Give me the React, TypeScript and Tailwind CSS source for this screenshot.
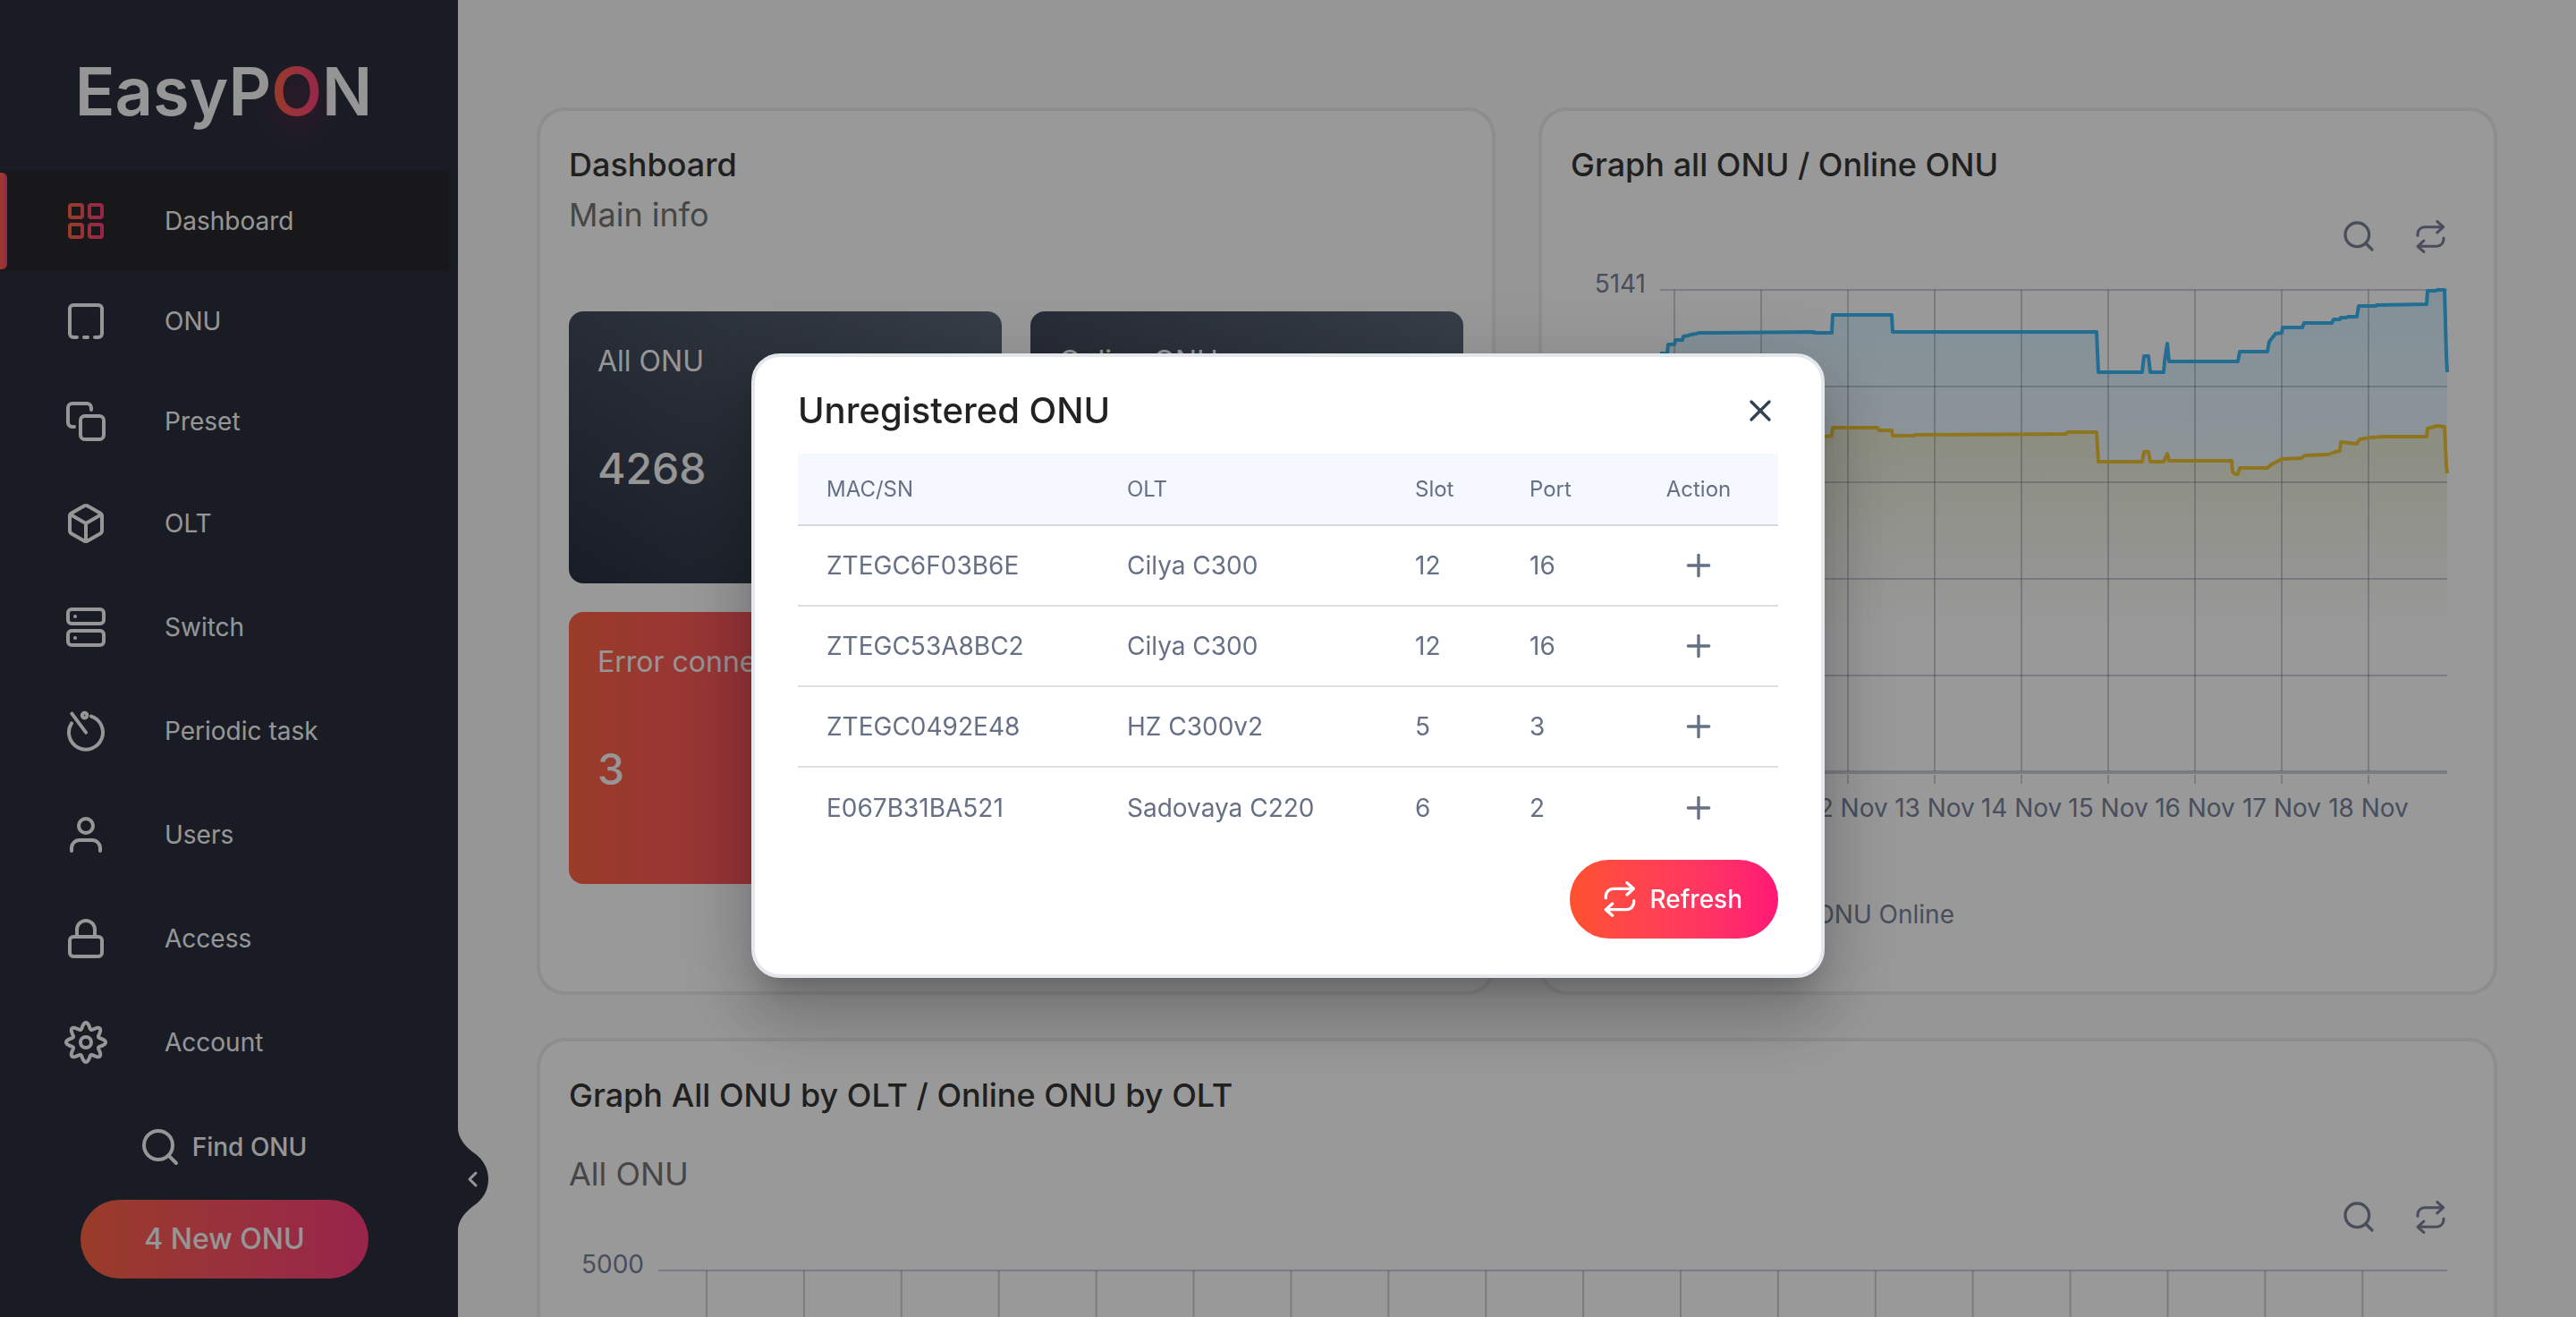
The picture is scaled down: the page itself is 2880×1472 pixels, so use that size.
import React from "react";
import { Box, LayoutGrid, Lock, Plus, Search, Server, X } from "lucide-react";

const stroke = {
  fill: "none",
  stroke: "currentColor",
  strokeWidth: 2,
  strokeLinecap: "round" as const,
  strokeLinejoin: "round" as const,
};

function GridIcon() {
  return (
    <>
      <svg className="absolute h-0 w-0" aria-hidden="true">
        <linearGradient id="accent" gradientUnits="userSpaceOnUse" x1="2" y1="0" x2="22" y2="0">
          <stop offset="0" stopColor="#ff6443" />
          <stop offset="1" stopColor="#fe3c7d" />
        </linearGradient>
      </svg>
      <LayoutGrid className="size-12" stroke="url(#accent)" />
    </>
  );
}

function OnuIcon() {
  return (
    <svg viewBox="0 0 24 24" className="size-12" {...stroke}>
      <path d="M7 21H5a2 2 0 0 1-2-2V5a2 2 0 0 1 2-2h14a2 2 0 0 1 2 2v14a2 2 0 0 1-2 2h-2M11 21h2" />
    </svg>
  );
}

function PresetIcon() {
  return (
    <svg viewBox="0 0 24 24" className="size-12" {...stroke}>
      <rect x="9" y="9" width="13" height="13" rx="2.4" />
      <path d="M15 5.5V4.4A2.4 2.4 0 0 0 12.6 2H4.4A2.4 2.4 0 0 0 2 4.4v8.2A2.4 2.4 0 0 0 4.4 15H5.5" />
    </svg>
  );
}

function TimerIcon() {
  return (
    <svg viewBox="0 0 24 24" className="size-12" {...stroke}>
      <path d="M15 3.8A9.5 9.5 0 1 1 4 7.7M12 12.8L4.2 2.3" />
      <circle cx="11.3" cy="3.3" r="1.4" />
    </svg>
  );
}

function UserIcon() {
  return (
    <svg viewBox="0 0 24 24" className="size-12" {...stroke}>
      <circle cx="12" cy="7" r="4" />
      <path d="M4 21v-1.5A4.5 4.5 0 0 1 8.5 15h7A4.5 4.5 0 0 1 20 19.5V21" />
    </svg>
  );
}

const gearPath =
  "M" +
  Array.from({ length: 160 }, (_, i) => {
    const t = (i / 160) * Math.PI * 2;
    const r = 9.3 + 1.7 * Math.cos(8 * t);
    return `${(12 + r * Math.cos(t)).toFixed(2)} ${(12 + r * Math.sin(t)).toFixed(2)}`;
  }).join("L") +
  "Z";

function GearIcon() {
  return (
    <svg viewBox="0 0 24 24" className="size-12 overflow-visible" {...stroke}>
      <path d={gearPath} />
      <circle cx="12" cy="12" r="3" />
    </svg>
  );
}

function RepeatIcon({ className }: { className: string }) {
  return (
    <svg viewBox="0 0 120 120" className={className} {...stroke} strokeWidth={10}>
      <path d="M13 56V50a25 25 0 0 1 25-25H105M84 5L106 25L84 45" />
      <path d="M107 65V70a25 25 0 0 1-25 25H15M35 75L13 95L35 115" />
    </svg>
  );
}

const navItems = [
  { label: "Dashboard", icon: <GridIcon />, active: true, height: "h-28" },
  { label: "ONU", icon: <OnuIcon />, height: "h-28" },
  { label: "Preset", icon: <PresetIcon />, height: "h-28" },
  { label: "OLT", icon: <Box className="size-12" />, height: "h-29" },
  { label: "Switch", icon: <Server className="size-12" />, height: "h-29" },
  { label: "Periodic task", icon: <TimerIcon />, height: "h-29" },
  { label: "Users", icon: <UserIcon />, height: "h-29" },
  { label: "Access", icon: <Lock className="size-12" />, height: "h-29" },
  { label: "Account", icon: <GearIcon />, height: "h-29" },
];

function Sidebar() {
  return (
    <aside className="relative flex w-[512px] shrink-0 flex-col bg-[#2a303e] text-[#fafafa]">
      <div className="flex h-[191px] items-center justify-center pt-3 pr-3">
        <a href="#" className="text-[74px] leading-none font-semibold">
          EasyP
          <span className="relative bg-gradient-to-r from-[#ff6443] to-[#fe3c7d] bg-clip-text text-transparent [filter:drop-shadow(0_16px_14px_rgb(255_23_110/0.3))]">
            O
          </span>
          N
        </a>
      </div>
      <nav className="flex flex-col pr-2.5">
        {navItems.map((item) => (
          <a
            key={item.label}
            href="#"
            className={`relative flex items-center gap-16 pl-[72px] text-[28px] ${item.height} ${item.active ? "bg-[#28292e]" : ""}`}
          >
            {item.active && (
              <span className="absolute inset-y-0.5 left-0 w-2 rounded-r-md bg-gradient-to-r from-[#ff6443] to-[#fe3c7d]" />
            )}
            {item.icon}
            {item.label}
          </a>
        ))}
      </nav>
      <div className="flex flex-col items-center gap-4 pt-4 pr-2.5">
        <button className="flex h-[86px] w-[400px] items-center justify-center gap-3 rounded-lg border-2 border-[#282e3b] pr-1 text-[28px] font-medium">
          <Search className="size-12" />
          Find ONU
        </button>
        <button className="h-22 w-[322px] rounded-full bg-gradient-to-r from-[#ff6443] to-[#fe3c7d] text-[32px] font-medium">
          4 New ONU
        </button>
      </div>
      <button aria-label="Collapse menu" className="absolute top-[1262px] left-full z-10 h-28 w-[34px]">
        <svg viewBox="0 0 34 112" className="h-28 w-[34px]">
          <path
            d="M0 0C1 11 8 19 17 26C28 33 34 44 34 56C34 68 28 79 17 86C8 93 1 101 0 112Z"
            fill="#2a303e"
          />
          <path d="M20 49L13 56L20 63" {...stroke} strokeWidth={3} />
        </svg>
      </button>
    </aside>
  );
}

const tiles = [
  { label: "All ONU", value: "4268", tone: "dark" },
  { label: "Online ONU", value: "", tone: "dark" },
  { label: "Error connection", value: "3", tone: "accent" },
];

function InfoCard() {
  return (
    <section className="rounded-[32px] border-4 border-[#e9ebee] bg-white p-8">
      <h2 className="text-[36px] leading-[56px] font-medium text-[#363636]">Dashboard</h2>
      <p className="text-[36px] leading-[56px] text-[#757575]">Main info</p>
      <div className="mt-20 grid grid-cols-2 gap-8">
        {tiles.map((tile) => (
          <div
            key={tile.label}
            className={`h-[304px] rounded-2xl px-8 pt-7 text-[#fafafa] ${
              tile.tone === "dark"
                ? "bg-gradient-to-tr from-[#293040] to-[#5d6878]"
                : "bg-gradient-to-r from-[#ff6443] to-[#fe3c7d]"
            }`}
          >
            <p className="text-[32px] leading-[56px]">{tile.label}</p>
            <p className="mt-14 text-[48px] leading-[72px] font-medium">{tile.value}</p>
          </div>
        ))}
      </div>
    </section>
  );
}

function ChartTools() {
  return (
    <div className="flex h-10 items-center justify-end gap-10.5 pr-5 text-[#79839a]">
      <button aria-label="Zoom">
        <Search className="size-10" />
      </button>
      <button aria-label="Restore">
        <RepeatIcon className="size-[37px]" />
      </button>
    </div>
  );
}

const allOnu =
  "100,95 108,95 109,85 116,85 117,80 125,80 126,76 132,75 134,74 141,73 143,72 164,72 272,71 273,72 292,72 293,52 359,52 360,71 555,71 588,71 590,116 639,116 641,98 646,98 648,116 663,116 664,104 667,84 669,104 746,104 748,93 779,93 781,82 788,73 795,72 796,66 818,66 820,61 851,61 853,57 860,57 861,55 867,55 869,54 879,54 881,42 900,42 901,41 957,40 958,25 967,25 969,24 977,24 979,96 980,116";
const onlineOnu =
  "100,194 140,190 220,188 284,188 292,187 293,178 343,178 345,181 359,181 360,187 384,187 386,186 554,185 556,183 588,183 590,216 639,216 641,205 646,205 648,216 663,216 667,207 669,215 739,215 740,227 743,230 746,230 748,223 779,223 782,220 795,213 817,212 821,209 847,208 855,205 860,204 861,194 879,196 882,191 894,189 910,188 957,188 958,179 969,176 977,177 979,221 980,229";

const rows = [24, 132, 239, 347, 455];
const days = [10, 11, 12, 13, 14, 15, 16, 17, 18].map((day, i) => ({ x: 116 + i * 97, label: `${day} Nov` }));

function OnuChart() {
  return (
    <svg viewBox="0 0 1000 640" className="mt-4 w-full overflow-visible" role="img" aria-label="ONU over time">
      <defs>
        <linearGradient id="blueArea" gradientUnits="userSpaceOnUse" x1="0" y1="24" x2="0" y2="400">
          <stop offset="0" stopColor="#3ab7f5" stopOpacity="0.2" />
          <stop offset="1" stopColor="#3ab7f5" stopOpacity="0" />
        </linearGradient>
        <linearGradient id="yellowArea" gradientUnits="userSpaceOnUse" x1="0" y1="176" x2="0" y2="400">
          <stop offset="0" stopColor="#eec332" stopOpacity="0.2" />
          <stop offset="1" stopColor="#eec332" stopOpacity="0" />
        </linearGradient>
      </defs>
      <polygon points={`100,563 ${allOnu} 980,563`} fill="url(#blueArea)" />
      <polygon points={`100,563 ${onlineOnu} 980,563`} fill="url(#yellowArea)" />
      <g stroke="#67758a" strokeOpacity="0.35" strokeWidth="2">
        {rows.map((y) => (
          <path key={y} d={`M100 ${y}H980`} />
        ))}
        {days.map((d) => (
          <path key={d.label} d={`M${d.x} 24V562M${d.x} 566V576`} />
        ))}
        <path d="M100 563H980" strokeWidth="4" />
      </g>
      <polyline points={allOnu} fill="none" stroke="#3ab7f5" strokeWidth="4" strokeLinejoin="round" />
      <polyline points={onlineOnu} fill="none" stroke="#eec332" strokeWidth="4" strokeLinejoin="round" />
      <g fill="#79839a" fontSize="28">
        <text x="84" y="27" textAnchor="end">
          5141
        </text>
        {days.map((d) => (
          <text key={d.label} x={d.x} y="613" textAnchor="middle">
            {d.label}
          </text>
        ))}
      </g>
    </svg>
  );
}

function GraphCard() {
  return (
    <section className="rounded-[32px] border-4 border-[#e9ebee] bg-white p-8">
      <h2 className="text-[36px] leading-[56px] font-medium text-[#363636]">Graph all ONU / Online ONU</h2>
      <div className="mt-8">
        <ChartTools />
      </div>
      <OnuChart />
      <div className="mt-12 mb-5 flex h-17 items-center justify-end pr-[571px] text-[28px] whitespace-nowrap text-[#79839a]">
        <span>ONU Online</span>
      </div>
    </section>
  );
}

function OltCard() {
  return (
    <section className="rounded-[32px] border-4 border-[#e9ebee] bg-white p-8">
      <h2 className="text-[36px] leading-[56px] font-medium text-[#363636]">
        Graph All ONU by OLT / Online ONU by OLT
      </h2>
      <p className="mt-8 text-[36px] leading-[56px] text-[#757575]">All ONU</p>
      <ChartTools />
      <svg viewBox="0 0 2120 300" className="w-full" role="img" aria-label="ONU by OLT">
        <g stroke="#67758a" strokeOpacity="0.35" strokeWidth="2">
          <path d="M100 40H2100" />
          {Array.from({ length: 18 }, (_, i) => (
            <path key={i} d={`M${154 + i * 108.9} 40V300`} />
          ))}
        </g>
        <text x="84" y="43" textAnchor="end" fontSize="28" fill="#79839a">
          5000
        </text>
      </svg>
    </section>
  );
}

const devices = [
  ["ZTEGC6F03B6E", "Cilya C300", "12", "16"],
  ["ZTEGC53A8BC2", "Cilya C300", "12", "16"],
  ["ZTEGC0492E48", "HZ C300v2", "5", "3"],
  ["E067B31BA521", "Sadovaya C220", "6", "2"],
];

function UnregisteredDialog() {
  return (
    <div className="fixed inset-0 z-20 flex items-center justify-center bg-black/40 pt-4">
      <div
        role="dialog"
        aria-modal="true"
        aria-labelledby="dialog-title"
        className="w-[1200px] rounded-[32px] border-4 border-[#e4e7ec] bg-white px-12 pt-9 pb-10 shadow-[0_22px_30px_-14px_rgb(0_0_0/0.2),0_48px_76px_6px_rgb(0_0_0/0.14),0_18px_92px_16px_rgb(0_0_0/0.12)]"
      >
        <div className="flex h-12 items-center justify-between">
          <h1 id="dialog-title" className="text-[40px] leading-none font-medium text-[#222222]">
            Unregistered ONU
          </h1>
          <button aria-label="Close" className="text-[#344054]">
            <X className="size-10" />
          </button>
        </div>
        <table className="mt-6 w-full table-fixed border-collapse text-left text-[#667085]">
          <colgroup>
            <col className="w-[336px]" />
            <col className="w-[322px]" />
            <col className="w-[128px]" />
            <col className="w-[132px]" />
            <col />
          </colgroup>
          <thead>
            <tr className="h-20 border-b-2 border-[#d5d9e0] bg-[#f5f8ff] text-[24px]">
              <th className="pl-8 font-normal">MAC/SN</th>
              <th className="pl-8 font-normal">OLT</th>
              <th className="pl-8 font-normal">Slot</th>
              <th className="pl-8 font-normal">Port</th>
              <th className="text-center font-normal">Action</th>
            </tr>
          </thead>
          <tbody>
            {devices.map((device) => (
              <tr key={device[0]} className="h-[90px] border-b-2 border-[#e0e0e0] text-[28px] last:border-0">
                {device.map((value, i) => (
                  <td key={i} className="pl-8">
                    {value}
                  </td>
                ))}
                <td>
                  <button aria-label={`Register ${device[0]}`} className="mx-auto block">
                    <Plus className="size-10" />
                  </button>
                </td>
              </tr>
            ))}
          </tbody>
        </table>
        <div className="mt-3.5 flex justify-end">
          <button className="flex h-22 items-center gap-3.5 rounded-full bg-gradient-to-r from-[#ff512f] to-[#ff1676] pr-10 pl-9 text-[28px] font-medium text-white">
            <RepeatIcon className="size-10" />
            Refresh
          </button>
        </div>
      </div>
    </div>
  );
}

export default function App() {
  return (
    <div className="flex h-screen overflow-hidden bg-[#fafafa] font-['Inter',sans-serif]">
      <Sidebar />
      <main className="min-w-0 flex-1 overflow-hidden px-22 pt-30">
        <div className="grid grid-cols-2 gap-12">
          <InfoCard />
          <GraphCard />
          <div className="col-span-2">
            <OltCard />
          </div>
        </div>
      </main>
      <UnregisteredDialog />
    </div>
  );
}
